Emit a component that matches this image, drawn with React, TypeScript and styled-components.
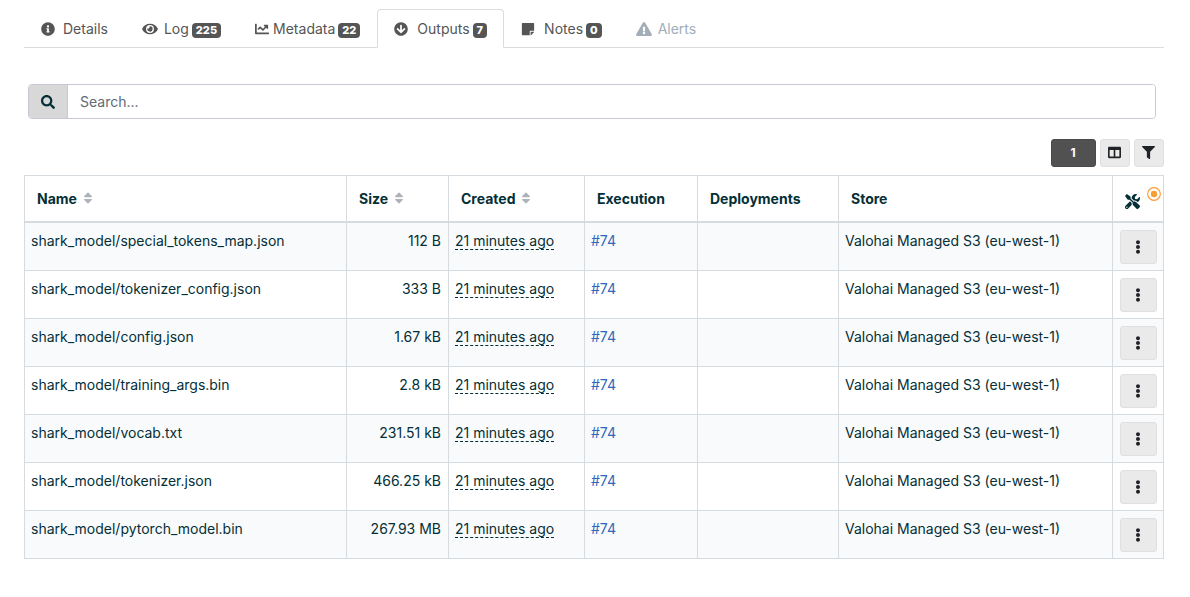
import React from "react";
import styled, { createGlobalStyle, css } from "styled-components";
import {
  FaInfoCircle,
  FaEye,
  FaChartLine,
  FaArrowCircleDown,
  FaStickyNote,
  FaExclamationTriangle,
  FaSearch,
  FaColumns,
  FaFilter,
  FaSort,
  FaTools,
  FaEllipsisV,
} from "react-icons/fa";

const colors = {
  text: "#042f36",
  tab: "#555555",
  muted: "#a3adb8",
  line: "#d6dbdf",
  tabLine: "#dadcde",
  inputLine: "#c6cad6",
  link: "#2f67bd",
  stripe: "#f9fafc",
  button: "#eaeaea",
  buttonLine: "#e0e0e0",
  accent: "#fb9d37",
};

const GlobalStyle = createGlobalStyle`
  *, *::before, *::after { box-sizing: border-box; }
  body {
    margin: 0;
    background: #fff;
    color: ${colors.text};
    font: 14px/21px Inter, "Liberation Sans", sans-serif;
  }
  button, input { font: inherit; color: inherit; }
`;

const Page = styled.main`
  padding: 9px 26px 24px 24px;
`;

const Tabs = styled.nav`
  display: flex;
  border-bottom: 1px solid ${colors.tabLine};
`;

const Tab = styled.button<{ $active?: boolean }>`
  display: flex;
  align-items: center;
  height: 39px;
  margin: 0 0 -1px;
  padding: 0 16px;
  border: 1px solid transparent;
  border-radius: 4px 4px 0 0;
  background: none;
  color: ${colors.tab};
  white-space: nowrap;
  cursor: pointer;
  ${(p) =>
    p.$active &&
    css`
      border-color: ${colors.tabLine};
      border-bottom-color: #fff;
      background: #fff;
    `}
  &:disabled {
    color: ${colors.muted};
    cursor: default;
  }
`;

const TabIcon = styled.span<{ $slot: number; $wide?: boolean }>`
  display: flex;
  width: ${(p) => p.$slot}px;
  margin-right: 4px;
  svg {
    flex: none;
    width: ${(p) => (p.$wide ? 16 : 14)}px;
    height: 14px;
  }
`;

const Badge = styled.span`
  margin: 3px 0 0 3px;
  padding: 0 4px;
  border-radius: 4px;
  background: ${colors.tab};
  color: #fff;
  font-size: 11px;
  font-weight: 800;
  line-height: 15px;
`;

const SearchGroup = styled.form`
  display: flex;
  height: 35px;
  margin: 36px 8px 20px 4px;
  border: 1px solid ${colors.inputLine};
  border-radius: 4px;
  overflow: hidden;
`;

const SearchButton = styled.button`
  display: flex;
  align-items: center;
  justify-content: center;
  width: 38px;
  padding: 0;
  border: 0;
  background: #d8d8d8;
  font-size: 14px;
`;

const SearchInput = styled.input`
  flex: 1;
  min-width: 0;
  padding: 0 12px;
  border: 0;
  border-left: 1px solid ${colors.inputLine};
  outline: none;
  &::placeholder {
    color: #626a74;
    opacity: 1;
  }
`;

const Toolbar = styled.div`
  display: flex;
  justify-content: flex-end;
  gap: 4px;
  margin-bottom: 8px;
`;

const PageButton = styled.button`
  width: 45px;
  height: 28px;
  padding: 0 1px 1px 0;
  border: 1px solid #4a4a4a;
  border-radius: 3px;
  background: #515151;
  color: #fff;
  font-size: 12px;
  font-weight: 700;
`;

const IconButton = styled.button<{ $large?: boolean }>`
  display: flex;
  align-items: center;
  justify-content: center;
  width: ${(p) => (p.$large ? 37 : 30)}px;
  height: ${(p) => (p.$large ? 34 : 28)}px;
  padding: ${(p) => (p.$large ? "0 1px 0 0" : "0 1px 1px 0")};
  border: 1px solid ${colors.buttonLine};
  border-radius: 3px;
  background: ${colors.button};
  color: #1f2328;
  font-size: ${(p) => (p.$large ? 14 : 13)}px;
`;

const Table = styled.table`
  width: 100%;
  table-layout: fixed;
  border-collapse: collapse;
`;

const Col = styled.col<{ $width: number }>`
  width: ${(p) => p.$width}px;
`;

const HeadCell = styled.th`
  height: 46px;
  padding: 0 12px;
  border: 1px solid ${colors.line};
  border-bottom-width: 2px;
  font-weight: 700;
  text-align: left;
  white-space: nowrap;
`;

const HeadLabel = styled.span`
  display: flex;
  align-items: center;
  gap: 4px;
`;

const SortIcon = styled(FaSort)`
  color: #adb3b9;
`;

const ToolsCell = styled(HeadCell)`
  position: relative;
`;

const ToolsIcon = styled(FaTools)`
  display: block;
  margin-top: 6px;
  font-size: 15px;
`;

const Beacon = styled.svg`
  position: absolute;
  top: 11px;
  right: 2px;
`;

const Row = styled.tr`
  &:nth-child(odd) {
    background: ${colors.stripe};
  }
`;

const Cell = styled.td<{ $right?: boolean }>`
  height: 48px;
  padding: 7px 7px 6px;
  border: 1px solid ${colors.line};
  text-align: ${(p) => (p.$right ? "right" : "left")};
  vertical-align: top;
  white-space: nowrap;
  &:not(:last-child) {
    padding-left: 6px;
  }
`;

const When = styled.time`
  display: inline-block;
  border-bottom: 1px dashed ${colors.text};
  line-height: 16px;
`;

const Link = styled.a`
  color: ${colors.link};
  text-decoration: none;
`;

const files = [
  { name: "shark_model/special_tokens_map.json", size: "112 B" },
  { name: "shark_model/tokenizer_config.json", size: "333 B" },
  { name: "shark_model/config.json", size: "1.67 kB" },
  { name: "shark_model/training_args.bin", size: "2.8 kB" },
  { name: "shark_model/vocab.txt", size: "231.51 kB" },
  { name: "shark_model/tokenizer.json", size: "466.25 kB" },
  { name: "shark_model/pytorch_model.bin", size: "267.93 MB" },
];

const tabs = [
  { label: "Details", icon: <FaInfoCircle />, slot: 18 },
  { label: "Log", icon: <FaEye />, slot: 18, wide: true, count: 225 },
  { label: "Metadata", icon: <FaChartLine />, slot: 14, count: 22 },
  { label: "Outputs", icon: <FaArrowCircleDown />, slot: 19, count: 7, active: true },
  { label: "Notes", icon: <FaStickyNote />, slot: 19, count: 0 },
  { label: "Alerts", icon: <FaExclamationTriangle />, slot: 18, wide: true, disabled: true },
];

const columns = [
  { label: "Name", width: 322, sortable: true },
  { label: "Size", width: 102, sortable: true },
  { label: "Created", width: 136, sortable: true },
  { label: "Execution", width: 113 },
  { label: "Deployments", width: 141 },
  { label: "Store", width: 274 },
];

export default function App() {
  return (
    <>
      <GlobalStyle />
      <Page>
        <Tabs>
          {tabs.map((t) => (
            <Tab key={t.label} type="button" $active={t.active} disabled={t.disabled}>
              <TabIcon $slot={t.slot} $wide={t.wide}>
                {t.icon}
              </TabIcon>
              {t.label}
              {t.count !== undefined && <Badge>{t.count}</Badge>}
            </Tab>
          ))}
        </Tabs>

        <SearchGroup onSubmit={(e) => e.preventDefault()}>
          <SearchButton type="submit" aria-label="Search">
            <FaSearch />
          </SearchButton>
          <SearchInput type="text" placeholder="Search..." aria-label="Search outputs" />
        </SearchGroup>

        <Toolbar>
          <PageButton type="button">1</PageButton>
          <IconButton type="button" aria-label="Columns">
            <FaColumns />
          </IconButton>
          <IconButton type="button" aria-label="Filter">
            <FaFilter />
          </IconButton>
        </Toolbar>

        <Table>
          <colgroup>
            {columns.map((c) => (
              <Col key={c.label} $width={c.width} />
            ))}
            <Col $width={51} />
          </colgroup>
          <thead>
            <tr>
              {columns.map((c) => (
                <HeadCell key={c.label} scope="col">
                  <HeadLabel>
                    {c.label}
                    {c.sortable && <SortIcon />}
                  </HeadLabel>
                </HeadCell>
              ))}
              <ToolsCell scope="col" aria-label="Actions">
                <ToolsIcon />
                <Beacon width="14" height="14" viewBox="0 0 14 14" aria-hidden="true">
                  <circle cx="7" cy="7" r="6.3" fill="#fff" stroke={colors.accent} strokeWidth="1.2" />
                  <circle cx="7" cy="7" r="3.2" fill={colors.accent} />
                </Beacon>
              </ToolsCell>
            </tr>
          </thead>
          <tbody>
            {files.map((f) => (
              <Row key={f.name}>
                <Cell>{f.name}</Cell>
                <Cell $right>{f.size}</Cell>
                <Cell>
                  <When>21 minutes ago</When>
                </Cell>
                <Cell>
                  <Link href="#74">#74</Link>
                </Cell>
                <Cell />
                <Cell>Valohai Managed S3 (eu-west-1)</Cell>
                <Cell>
                  <IconButton type="button" $large aria-label={`Actions for ${f.name}`}>
                    <FaEllipsisV />
                  </IconButton>
                </Cell>
              </Row>
            ))}
          </tbody>
        </Table>
      </Page>
    </>
  );
}
